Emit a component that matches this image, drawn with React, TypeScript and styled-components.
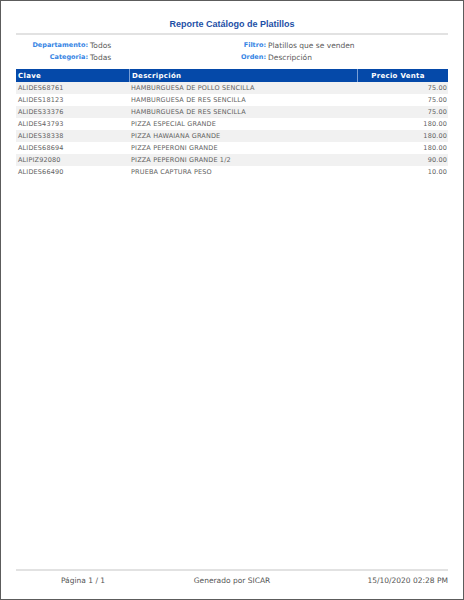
import React from "react";
import styled, { createGlobalStyle } from "styled-components";

const Global = createGlobalStyle`
  html, body { margin: 0; padding: 0; background: #fff; }
  body { font-family: "DejaVu Sans", Verdana, sans-serif; }
  * { box-sizing: border-box; }
`;

const Page = styled.div`
  width: 464px;
  height: 600px;
  border: 1px solid #5c5c5c;
  padding: 17px 15px 0 15px;
  display: flex;
  flex-direction: column;
  background: #fff;
`;

const Title = styled.h1`
  margin: 0;
  font-family: "Liberation Sans", Arial, sans-serif;
  font-size: 9px;
  line-height: 12px;
  font-weight: bold;
  color: #1d4fa6;
  text-align: center;
`;

const Rule = styled.div`
  margin-top: 3px;
  height: 2px;
  background: #e2e2e2;
`;

const Meta = styled.div`
  margin-top: 4px;
  display: grid;
  grid-template-columns: 72px 122px 56px 1fr;
  grid-auto-rows: 12px;
  align-items: center;
  font-size: 7.5px;
`;

const Label = styled.span`
  text-align: right;
  color: #3584e4;
  font-weight: bold;
  font-size: 6.5px;
`;

const Value = styled.span`
  color: #5a5a5a;
  padding-left: 2px;
  white-space: nowrap;
`;

const Table = styled.div`
  margin-top: 6px;
  display: flex;
  flex-direction: column;
`;

const Grid = styled.div<{ $head?: boolean; $alt?: boolean }>`
  display: grid;
  grid-template-columns: 113px 228px 1fr;
  height: ${(p) => (p.$head ? 13 : 12)}px;
  align-items: center;
  background: ${(p) => (p.$head ? "#0549a9" : p.$alt ? "#f1f1f1" : "#fff")};
  color: ${(p) => (p.$head ? "#fff" : "#626262")};
  font-size: ${(p) => (p.$head ? "7px" : "6.5px")};
  font-weight: ${(p) => (p.$head ? "bold" : "normal")};
  letter-spacing: ${(p) => (p.$head ? "0.3px" : "0.15px")};
`;

const Cell = styled.div<{ $align?: "left" | "right" | "center"; $sep?: boolean }>`
  height: 100%;
  display: flex;
  align-items: center;
  justify-content: ${(p) =>
    p.$align === "right" ? "flex-end" : p.$align === "center" ? "center" : "flex-start"};
  padding: 0 ${(p) => (p.$align === "center" ? "12px" : "1px")} 0 2px;
  border-left: ${(p) => (p.$sep ? "1px solid #7a9fd6" : "none")};
  white-space: nowrap;
  overflow: hidden;
`;

const Spacer = styled.div`
  flex: 1;
`;

const FootRule = styled.div`
  height: 2px;
  background: #e2e2e2;
`;

const Footer = styled.div`
  display: grid;
  grid-template-columns: 134px 164px 1fr;
  height: 18px;
  align-items: center;
  margin-bottom: 10px;
  color: #555;
  font-size: 7.5px;
`;

const FootCell = styled.div<{ $align: "center" | "right" }>`
  text-align: ${(p) => p.$align};
  white-space: nowrap;
`;

const rows = [
  ["ALIDES68761", "HAMBURGUESA DE POLLO SENCILLA", "75.00"],
  ["ALIDES18123", "HAMBURGUESA DE RES SENCILLA", "75.00"],
  ["ALIDES33376", "HAMBURGUESA DE RES SENCILLA", "75.00"],
  ["ALIDES43793", "PIZZA ESPECIAL GRANDE", "180.00"],
  ["ALIDES38338", "PIZZA HAWAIANA GRANDE", "180.00"],
  ["ALIDES68694", "PIZZA PEPERONI GRANDE", "180.00"],
  ["ALIPIZ92080", "PIZZA PEPERONI GRANDE 1/2", "90.00"],
  ["ALIDES66490", "PRUEBA CAPTURA PESO", "10.00"],
];

export default function App() {
  return (
    <>
      <Global />
      <Page>
        <Title>Reporte Catálogo de Platillos</Title>
        <Rule />
        <Meta>
          <Label>Departamento:</Label>
          <Value>Todos</Value>
          <Label>Filtro:</Label>
          <Value>Platillos que se venden</Value>
          <Label>Categoria:</Label>
          <Value>Todas</Value>
          <Label>Orden:</Label>
          <Value>Descripción</Value>
        </Meta>
        <Table>
          <Grid $head>
            <Cell>Clave</Cell>
            <Cell $sep>Descripción</Cell>
            <Cell $sep $align="center">Precio Venta</Cell>
          </Grid>
          {rows.map((r, i) => (
            <Grid key={r[0]} $alt={i % 2 === 0}>
              <Cell>{r[0]}</Cell>
              <Cell>{r[1]}</Cell>
              <Cell $align="right">{r[2]}</Cell>
            </Grid>
          ))}
        </Table>
        <Spacer />
        <FootRule />
        <Footer>
          <FootCell $align="center">Página 1 / 1</FootCell>
          <FootCell $align="center">Generado por SICAR</FootCell>
          <FootCell $align="right">15/10/2020 02:28 PM</FootCell>
        </Footer>
      </Page>
    </>
  );
}
